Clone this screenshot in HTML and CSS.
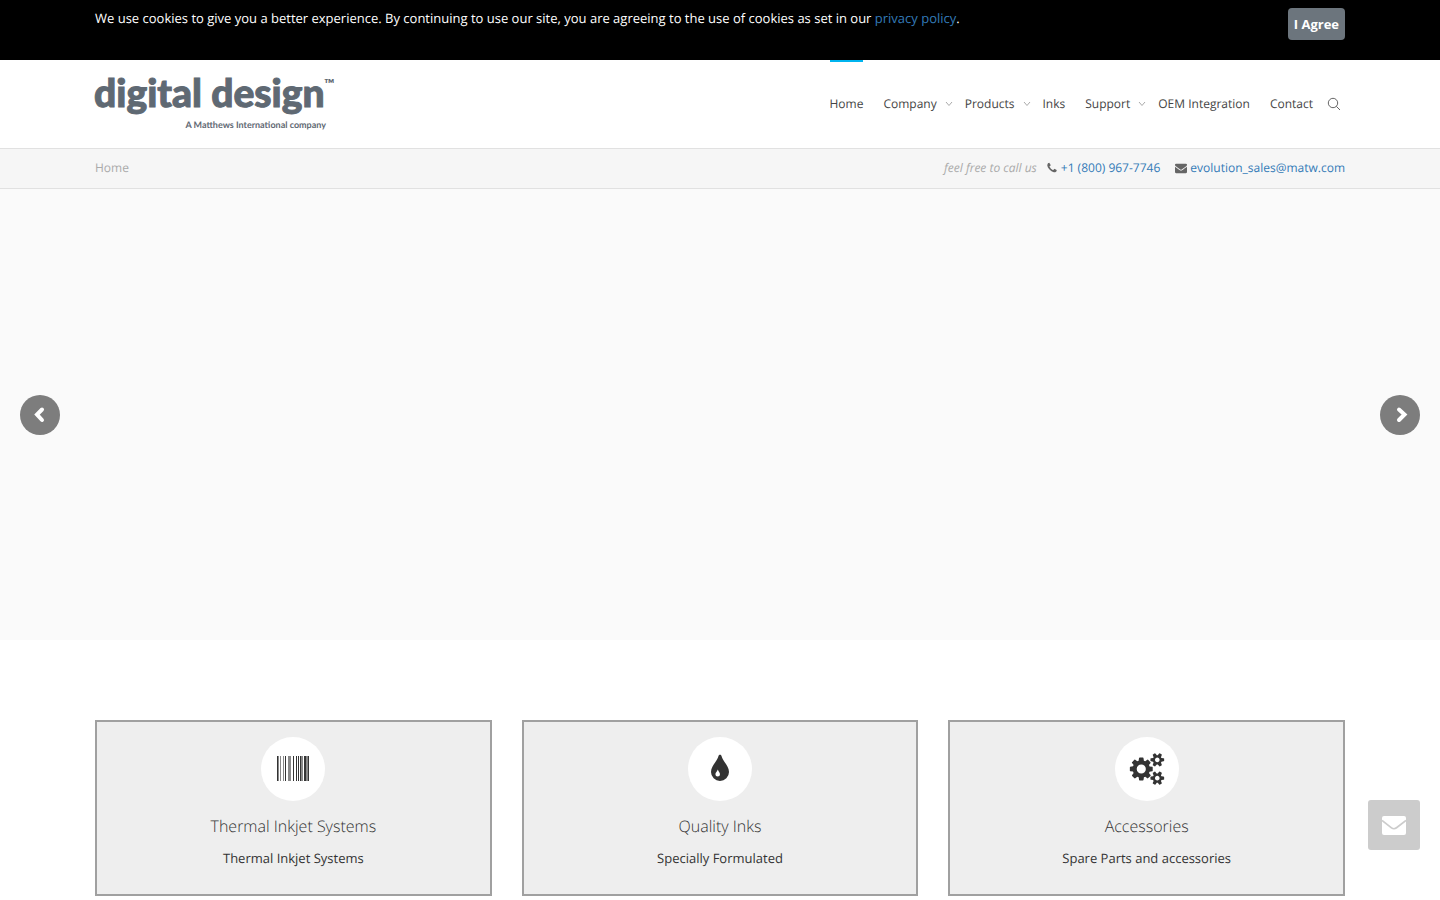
FILE: index.html
```html
<!DOCTYPE html>
<html lang="en">
<head>
<meta charset="utf-8">
<meta name="viewport" content="width=device-width, initial-scale=1">
<title>Digital Design</title>
<link rel="stylesheet" href="styles.css">
</head>
<body>
<aside class="cookie">
  <div class="container cookie-row">
    <p class="cookie-text">We use cookies to give you a better experience. By continuing to use our site, you are agreeing to the use of cookies as set in our <a href="#">privacy policy</a>.</p>
    <button class="agree" type="button">I Agree</button>
  </div>
</aside>
<header class="header">
  <div class="container header-row">
    <a class="logo" href="#" aria-label="digital design home">
      <svg width="242" height="56" viewBox="0 0 242 56">
        <text class="logo-name" x="-1" y="31">digital design</text>
        <text class="logo-tm" x="229" y="13">™</text>
        <text class="logo-tag" x="231" y="52" text-anchor="end">A Matthews International company</text>
      </svg>
    </a>
    <nav class="nav">
      <a class="nav-link active" href="#">Home</a>
      <a class="nav-link has-sub" href="#">Company<svg class="chev" viewBox="0 0 8 8"><path d="M1 2l3 3.500 3-3.500"/></svg></a>
      <a class="nav-link has-sub" href="#">Products<svg class="chev" viewBox="0 0 8 8"><path d="M1 2l3 3.500 3-3.500"/></svg></a>
      <a class="nav-link" href="#">Inks</a>
      <a class="nav-link has-sub" href="#">Support<svg class="chev" viewBox="0 0 8 8"><path d="M1 2l3 3.500 3-3.500"/></svg></a>
      <a class="nav-link" href="#">OEM Integration</a>
      <a class="nav-link" href="#">Contact</a>
      <button class="search" type="button" aria-label="Search"><svg width="14" height="14" viewBox="0 0 14 14"><circle cx="6" cy="6" r="4.700"/><path d="M9.300 9.300L13 13"/></svg></button>
    </nav>
  </div>
</header>
<div class="subbar">
  <div class="container subbar-row">
    <span class="crumb">Home</span>
    <div class="contact">
      <em class="call">feel free to call us</em>
      <span class="contact-item"><svg width="12" height="12" viewBox="0 0 1792 1792"><path d="M1600 1240q0 27-10 70.500t-21 68.500q-21 50-122 106-94 51-186 51-27 0-53-3.500t-57.500-12.500-47-14.500-55.500-20.500-49-18q-98-35-175-83-127-79-264-216t-216-264q-48-77-83-175-3-9-18-49t-20.500-55.500-14.500-47-12.500-57.500-3.500-53q0-92 51-186 56-101 106-122 25-11 68.500-21t70.500-10q14 0 21 3 18 6 53 76 11 19 30 54t35 63.500 31 53.500q3 4 17.500 25t21.500 35.500 7 28.500q0 20-28.500 50t-62 55-62 53-28.500 46q0 9 5 22.500t8.500 20.500 14 24 11.500 19q76 137 174 235t235 174q2 1 19 11.500t24 14 20.500 8.500 22.500 5q18 0 46-28.500t53-62 55-62 50-28.500q14 0 28.500 7t35.500 21.500 25 17.500q25 15 53.500 31t63.500 35 54 30q70 35 76 53 3 7 3 21z"/></svg><a href="#">+1 (800) 967-7746</a></span>
      <span class="contact-item"><svg width="12" height="12" viewBox="0 0 1792 1792"><path d="M1792 710v794q0 66-47 113t-113 47h-1472q-66 0-113-47t-47-113v-794q44 49 101 87 362 246 497 345 57 42 92.500 65.500t94.500 48 110 24.500h2q51 0 110-24.500t94.500-48 92.500-65.500q170-123 498-345 57-39 100-87zm0-294q0 79-49 151t-122 123q-376 261-468 325-10 7-42.500 31t-54 38.800-52 32.500-57.500 27-50 9h-2q-23 0-50-9t-57.500-27-52-32.500-54-38.800-42.500-31q-91-64-262-182.500t-205-142.500q-62-42-117-115.500t-55-136.500q0-78 41.500-130t118.500-52h1472q65 0 112.500 47t47.500 113z"/></svg><a href="#">evolution_sales@matw.com</a></span>
    </div>
  </div>
</div>
<main>
  <section class="hero" aria-label="Slideshow">
    <button class="arrow" type="button" aria-label="Previous"><svg width="40" height="40" viewBox="0 0 40 40"><path d="M22 14.500l-5 5 5 5.500"/></svg></button>
    <button class="arrow" type="button" aria-label="Next"><svg width="40" height="40" viewBox="0 0 40 40"><path d="M19 14.500l5.500 5-5.500 5.500"/></svg></button>
  </section>
  <section class="container cards">
    <article class="card">
      <div class="disc"><svg width="32" height="26" viewBox="0 0 32 26" shape-rendering="crispEdges"><path fill="#333" d="M0 0h1v25h-1zM8 0h1v25h-1zM16 0h1v25h-1zM19 0h1v25h-1zM21 0h1v25h-1zM23 0h1v25h-1zM27 0h2v25h-2zM31 0h1v25h-1z"/><path fill="#888" d="M1 0h1v25h-1zM3 0h1v25h-1zM6 0h1v25h-1zM11 0h3v25h-3zM24 0h2v25h-2zM29 0h2v25h-2z"/></svg></div>
      <h2>Thermal Inkjet Systems</h2>
      <p>Thermal Inkjet Systems</p>
    </article>
    <article class="card">
      <div class="disc"><svg width="20" height="30" viewBox="0 0 20 30"><path fill="#333" d="M10 .7C10.800.7 11.300 1.200 11.500 2C12.800 7.500 19 11.800 19 18A9 9 0 0 1 1 18C1 11.800 7.200 7.500 8.500 2C8.700 1.200 9.200.7 10 .7z"/><path fill="#fff" d="M7.800 15.500C8.300 17.500 10 18.500 10 20.300a2.300 2.300 0 0 1-4.600 0C5.400 18.500 7.300 17.500 7.800 15.500z"/></svg></div>
      <h2>Quality Inks</h2>
      <p>Specially Formulated</p>
    </article>
    <article class="card">
      <div class="disc"><svg width="36" height="32" viewBox="0 0 1920 1792"><path fill="#333" d="M896 896q0-106-75-181t-181-75-181 75-75 181 75 181 181 75 181-75 75-181zm768 512q0-52-38-90t-90-38-90 38-38 90q0 53 37.500 90.500t90.500 37.500 90.500-37.500 37.500-90.500zm0-1024q0-52-38-90t-90-38-90 38-38 90q0 53 37.500 90.500t90.500 37.500 90.500-37.500 37.500-90.500zm-384 421v185q0 10-7 19.500t-16 10.500l-155 24q-11 35-32 76 34 48 90 115 7 11 7 20 0 12-7 19-23 30-82.500 89.500t-78.500 59.500q-11 0-21-7l-115-90q-37 19-77 31-11 108-23 155-7 24-30 24h-186q-11 0-20-7.500t-10-17.500l-23-153q-34-10-75-31l-118 89q-7 7-20 7-11 0-21-8-144-133-144-160 0-9 7-19 10-14 41-53t47-61q-23-44-35-82l-152-24q-10-1-17-9.500t-7-19.500v-185q0-10 7-19.500t16-10.500l155-24q11-35 32-76-34-48-90-115-7-11-7-20 0-12 7-20 22-30 82-89t79-59q11 0 21 7l115 90q34-18 77-32 11-108 23-154 7-24 30-24h186q11 0 20 7.500t10 17.500l23 153q34 10 75 31l118-89q8-7 20-7 11 0 21 8 144 133 144 160 0 8-7 19-12 16-42 54t-45 60q23 48 34 82l152 23q10 2 17 10.500t7 19.500zm640 533v140q0 16-149 31-12 27-30 52 51 113 51 138 0 4-4 7-122 71-124 71-8 0-46-47t-52-68q-20 2-30 2t-30-2q-14 21-52 68t-46 47q-2 0-124-71-4-3-4-7 0-25 51-138-18-25-30-52-149-15-149-31v-140q0-16 149-31 13-29 30-52-51-113-51-138 0-4 4-7 4-2 35-20t59-34 30-16q8 0 46 46.500t52 67.500q20-2 30-2t30 2q51-71 92-112l6-2q4 0 124 70 4 3 4 7 0 25-51 138 17 23 30 52 149 15 149 31zm0-1024v140q0 16-149 31-12 27-30 52 51 113 51 138 0 4-4 7-122 71-124 71-8 0-46-47t-52-68q-20 2-30 2t-30-2q-14 21-52 68t-46 47q-2 0-124-71-4-3-4-7 0-25 51-138-18-25-30-52-149-15-149-31v-140q0-16 149-31 13-29 30-52-51-113-51-138 0-4 4-7 4-2 35-20t59-34 30-16q8 0 46 46.500t52 67.500q20-2 30-2t30 2q51-71 92-112l6-2q4 0 124 70 4 3 4 7 0 25-51 138 17 23 30 52 149 15 149 31z"/></svg></div>
      <h2>Accessories</h2>
      <p>Spare Parts and accessories</p>
    </article>
  </section>
</main>
<button class="mail" type="button" aria-label="Send a message"><svg width="24" height="19" viewBox="0 0 24 19"><rect width="24" height="19" rx="2" fill="#fff"/><path d="M0 4.500l9.500 7.300q2.500 1.900 5 0L24 4.500" fill="none" stroke="#ccc" stroke-width="1.700"/></svg></button>
</body>
</html>
```
FILE: styles.css
```css
* {
  box-sizing: border-box;
}

body {
  margin: 0;
  background: #fff;
  color: #333;
  font: 13px/20px "Open Sans", "Noto Sans", sans-serif;
  text-rendering: geometricPrecision;
}

a {
  color: #337ab7;
  text-decoration: none;
}

button {
  border: 0;
  padding: 0;
  font: inherit;
  cursor: pointer;
}

svg {
  display: block;
  flex: none;
}

.container {
  width: 100%;
  max-width: 1280px;
  margin: 0 auto;
  padding: 0 15px;
}

.cookie {
  min-height: 60px;
  padding: 8px 0;
  background: #000;
  color: #fff;
}

.cookie-row {
  display: flex;
  align-items: flex-start;
  justify-content: space-between;
}

.cookie-text {
  margin: 0;
}

.agree {
  padding: 6px;
  border-radius: 4px;
  background: #6c757d;
  color: #fff;
  font-weight: 700;
}

.header-row {
  display: flex;
  justify-content: space-between;
  min-height: 88px;
}

.logo {
  padding-top: 16px;
}

.logo svg {
  overflow: visible;
  fill: #5f6973;
}

.logo-name {
  font: 900 39px Lato, sans-serif;
  stroke: #5f6973;
  stroke-width: 1px;
}

.logo-tm {
  font: 700 14px Lato, sans-serif;
}

.logo-tag {
  font: 700 9px Lato, sans-serif;
}

.nav {
  display: flex;
  gap: 20px;
  padding-right: 4px;
  font-size: 12px;
}

.nav-link {
  display: flex;
  align-items: center;
  gap: 8px;
  border-top: 2px solid transparent;
  border-bottom: 2px solid transparent;
  color: #444;
}

.nav-link.active {
  border-top-color: #00b4ef;
}

.has-sub {
  margin-right: -8px;
}

.chev {
  width: 8px;
  height: 8px;
  fill: none;
  stroke: #aaa;
}

.search {
  margin-left: -6px;
  background: none;
}

.search svg {
  fill: none;
  stroke: #666;
}

.subbar {
  border-top: 1px solid #e1e1e1;
  border-bottom: 1px solid #e1e1e1;
  background: #f6f6f6;
  font-size: 12px;
}

.subbar-row {
  display: flex;
  align-items: center;
  justify-content: space-between;
  min-height: 39px;
  padding-bottom: 2px;
}

.crumb,
.call {
  color: #aaa;
}

.contact {
  display: flex;
}

.contact-item {
  display: flex;
  align-items: center;
  gap: 3px;
  margin-left: 15px;
}

.call + .contact-item {
  margin-left: 9px;
}

.contact-item svg {
  fill: #666;
}

.hero {
  display: flex;
  align-items: center;
  justify-content: space-between;
  min-height: 451px;
  padding: 0 20px;
  background: #fafafa;
}

.arrow {
  border-radius: 50%;
  background: #7d7d7d;
}

.arrow path {
  fill: none;
  stroke: #fff;
  stroke-width: 4;
  stroke-linecap: round;
}

.cards {
  display: grid;
  grid-template-columns: repeat(3, 1fr);
  gap: 30px;
  padding-top: 80px;
}

.card {
  display: flex;
  flex-direction: column;
  align-items: center;
  padding: 15px 15px 26px;
  border: 2px solid #a0a0a0;
  background: #eee;
  text-align: center;
}

.disc {
  display: grid;
  place-items: center;
  width: 64px;
  height: 64px;
  border-radius: 50%;
  background: #fff;
}

.card h2 {
  margin: 15px 0 12px;
  font-size: 16px;
  font-weight: 300;
  line-height: 20px;
}

.card p {
  margin: 0;
}

.mail {
  position: fixed;
  right: 20px;
  bottom: 50px;
  display: grid;
  place-items: center;
  width: 52px;
  height: 50px;
  border-radius: 3px;
  background: #ccc;
}
```
